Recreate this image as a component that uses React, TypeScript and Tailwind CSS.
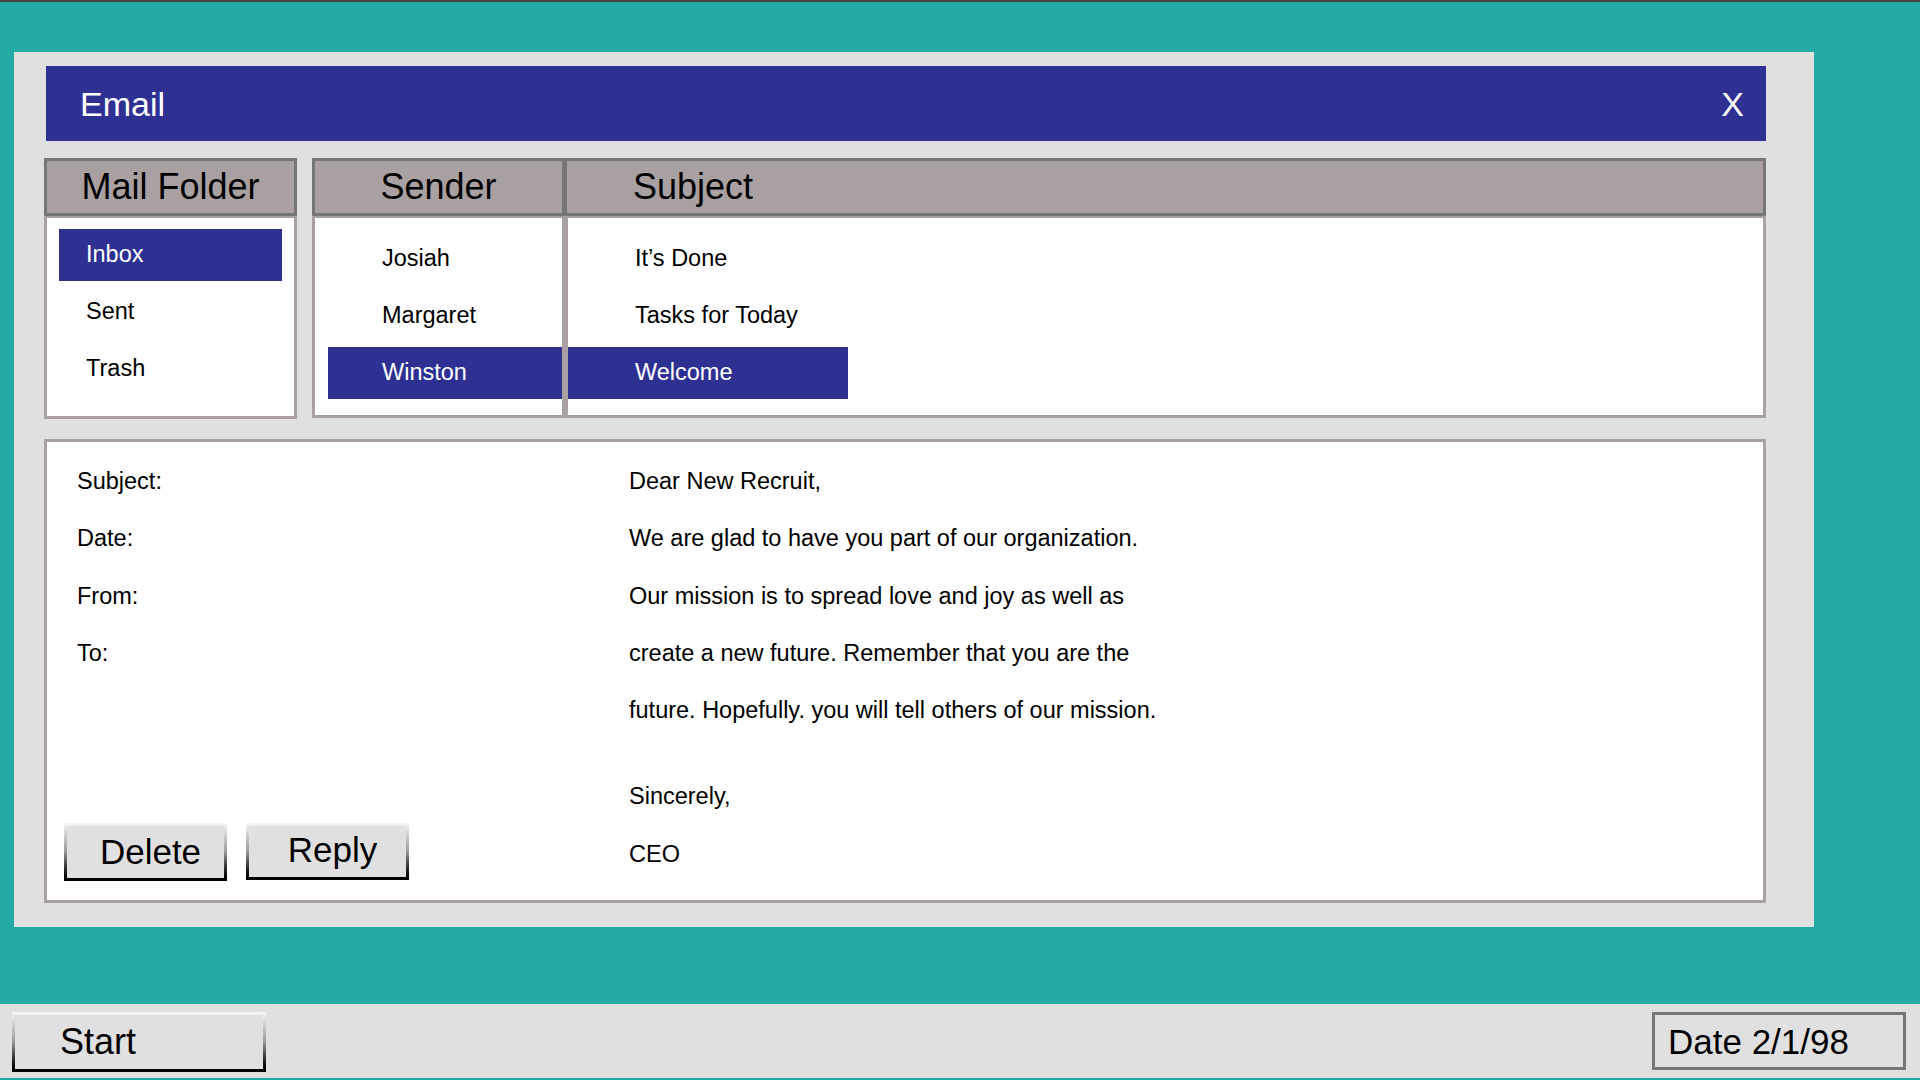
import { ReactNode } from 'react';

const folders = ['Inbox', 'Sent', 'Trash'];

const messages = [
  { sender: 'Josiah', subject: 'It’s Done' },
  { sender: 'Margaret', subject: 'Tasks for Today' },
  { sender: 'Winston', subject: 'Welcome' },
];

const bodyLines = [
  'Dear New Recruit,',
  'We are glad to have you part of our organization.',
  'Our mission is to spread love and joy as well as',
  'create a new future. Remember that you are the',
  'future. Hopefully. you will tell others of our mission.',
];

function RetroButton({ children, className = '' }: { children: ReactNode; className?: string }) {
  return (
    <div className={`bg-gradient-to-b from-[#f6f6f6] via-[#9a9a9a] to-black p-[3px] ${className}`}>
      <div className="h-full w-full bg-[#e0e0e0] flex items-center">{children}</div>
    </div>
  );
}

export default function App() {
  const selectedFolder = 'Inbox';
  const selectedSender = 'Winston';

  return (
    <div className="w-[1920px] h-[1080px] overflow-hidden bg-[#24aba5] flex flex-col font-['Liberation_Sans',Arial,sans-serif] text-black">
      <div className="h-[2px] bg-[#474747] shrink-0"></div>

      {/* window */}
      <div className="mt-[50px] ml-[14px] w-[1800px] h-[875px] bg-[#e0e0e0] pt-[14px] pl-[30px] pr-[48px] pb-[24px] flex flex-col shrink-0">
        <div className="ml-[2px] h-[75px] bg-[#2e3192] flex items-center justify-between pl-[34px] pr-[22px] text-white text-[34px] leading-none">
          <span>Email</span>
          <span>X</span>
        </div>

        <div className="mt-[17px] flex gap-[15px]">
          {/* folders */}
          <div className="w-[253px] flex flex-col">
            <div className="h-[58px] bg-[#a9a1a1] border-[3px] border-[#767676] flex items-center justify-center text-[36px] leading-none">
              Mail Folder
            </div>
            <div className="h-[203px] bg-white border-[3px] border-t-[2px] border-[#a9a1a1] px-[12px] pt-[11px] flex flex-col gap-[5px]">
              {folders.map((f) => (
                <div
                  key={f}
                  className={`h-[52px] flex items-center pl-[27px] text-[23.5px] leading-none ${
                    f === selectedFolder ? 'bg-[#2e3192] text-white' : ''
                  }`}
                >
                  {f}
                </div>
              ))}
            </div>
          </div>

          {/* message list */}
          <div className="flex-1 flex flex-col">
            <div className="h-[58px] bg-[#a9a1a1] border-[3px] border-[#767676] flex text-[36px] leading-none">
              <div className="w-[252px] border-r-[5px] border-[#767676] flex items-center justify-center">Sender</div>
              <div className="flex-1 flex items-center pl-[66px]">Subject</div>
            </div>
            <div className="h-[202px] bg-white border-[3px] border-t-[2px] border-[#a9a1a1] flex">
              <div className="w-[253px] border-r-[6px] border-[#a9a1a1] pl-[13px] pt-[15px] flex flex-col gap-[5px]">
                {messages.map((m) => (
                  <div
                    key={m.sender}
                    className={`h-[52px] flex items-center pl-[54px] text-[23.5px] leading-none ${
                      m.sender === selectedSender ? 'bg-[#2e3192] text-white' : ''
                    }`}
                  >
                    {m.sender}
                  </div>
                ))}
              </div>
              <div className="flex-1 pt-[15px] flex flex-col gap-[5px]">
                {messages.map((m) => (
                  <div
                    key={m.subject}
                    className={`w-[280px] h-[52px] flex items-center pl-[67px] text-[23.5px] leading-none ${
                      m.sender === selectedSender ? 'bg-[#2e3192] text-white' : ''
                    }`}
                  >
                    {m.subject}
                  </div>
                ))}
              </div>
            </div>
          </div>
        </div>

        {/* preview */}
        <div className="mt-[20px] flex-1 bg-white border-[3px] border-[#a9a1a1] flex text-[23.5px] leading-[57.3px]">
          <div className="w-[582px] flex flex-col">
            <div className="pl-[30px] pt-[11px]">
              <div>Subject:</div>
              <div>Date:</div>
              <div>From:</div>
              <div>To:</div>
            </div>
            <div className="mt-auto mb-[19px] pl-[17px] flex gap-[19px] text-[35px] leading-none">
              <RetroButton className="w-[163px] h-[58px]">
                <span className="w-full text-center pl-[10px] -mt-[2px]">Delete</span>
              </RetroButton>
              <RetroButton className="w-[163px] h-[57px]">
                <span className="w-full text-center pl-[10px] -mt-[4px]">Reply</span>
              </RetroButton>
            </div>
          </div>
          <div className="flex-1 pt-[11px]">
            {bodyLines.map((l) => (
              <div key={l}>{l}</div>
            ))}
            <div className="mt-[29px]">Sincerely,</div>
            <div>CEO</div>
          </div>
        </div>
      </div>

      {/* taskbar */}
      <div className="mt-[77px] h-[74px] bg-[#e0e0e0] flex items-center justify-between pl-[12px] pr-[14px] shrink-0">
        <RetroButton className="w-[254px] h-[60px] mt-[2px]">
          <span className="pl-[45px] text-[36px] leading-none">Start</span>
        </RetroButton>
        <div className="w-[254px] h-[58px] border-[3px] border-[#767676] bg-[#e0e0e0] flex items-center pl-[13px] text-[35px] leading-none">
          Date 2/1/98
        </div>
      </div>
    </div>
  );
}
